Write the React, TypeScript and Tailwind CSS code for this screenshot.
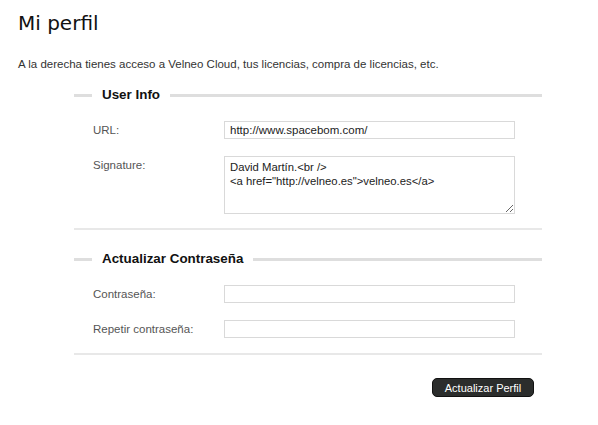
import React from 'react'

const sans = { fontFamily: '"Liberation Sans", Arial, sans-serif' }

function Legend({ title }: { title: string }) {
  return (
    <div className="flex items-center h-4">
      <div className="w-[18px] h-[3px] bg-[#dedede]" />
      <span className="px-[10px] text-[13.4px] font-bold leading-4 text-[#111]">{title}</span>
      <div className="flex-1 h-[3px] bg-[#dedede]" />
    </div>
  )
}

function Field({ label, children, className = '' }: { label: string; children: React.ReactNode; className?: string }) {
  return (
    <div className={`flex items-start pl-[19px] ${className}`}>
      <label className="w-[131px] text-[11.5px] leading-[18px] text-[#555]">{label}</label>
      {children}
    </div>
  )
}

const inputCls =
  'w-[291px] h-[18px] border border-[#d9d9d9] bg-white px-[5px] text-[11.5px] leading-4 text-[#222] outline-none'

export default function App() {
  return (
    <div className="min-h-[425px] bg-white pl-[18px] pt-[11px]" style={sans}>
      <h1 className="text-[20px] leading-6 font-normal text-[#111]" style={{ fontFamily: '"DejaVu Sans", Verdana, sans-serif' }}>
        Mi perfil
      </h1>
      <p className="mt-[21px] text-[11.5px] leading-4 text-[#333]">
        A la derecha tienes acceso a Velneo Cloud, tus licencias, compra de licencias, etc.
      </p>

      <form className="ml-[56px] w-[468px]" onSubmit={e => e.preventDefault()}>
        <div className="mt-[15px]">
          <Legend title="User Info" />
          <Field label="URL:" className="mt-[18px]">
            <input className={inputCls} defaultValue="http://www.spacebom.com/" />
          </Field>
          <Field label="Signature:" className="mt-[17px]">
            <textarea
              className="w-[291px] h-[58px] border border-[#d9d9d9] bg-white px-[5px] pt-[3px] text-[11.3px] leading-[14px] text-[#222] outline-none"
              defaultValue={'David Martín.<br />\n<a href="http://velneo.es">velneo.es</a>'}
            />
          </Field>
          <div className="mt-[14px] h-[2px] bg-[#e8e8e8]" />
        </div>

        <div className="mt-[21px]">
          <Legend title="Actualizar Contraseña" />
          <Field label="Contraseña:" className="mt-[18px]">
            <input type="password" className={inputCls} />
          </Field>
          <Field label="Repetir contraseña:" className="mt-[17px]">
            <input type="password" className={inputCls} />
          </Field>
          <div className="mt-[15px] h-[2px] bg-[#e8e8e8]" />
        </div>

        <div className="mt-[23px] flex justify-end pr-[8px]">
          <button
            type="submit"
            className="h-[19px] w-[102px] rounded-[5px] border border-[#111] bg-[#2b2d2c] text-[11px] leading-4 text-white"
          >
            Actualizar Perfil
          </button>
        </div>
      </form>
    </div>
  )
}
